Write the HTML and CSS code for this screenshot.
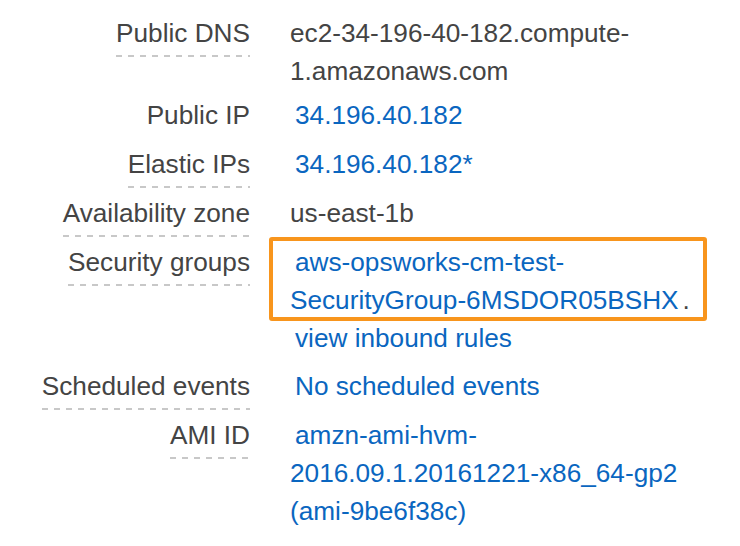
FILE: index.html
```html
<!DOCTYPE html>
<html>
<head>
<meta charset="utf-8">
<link rel="stylesheet" href="styles.css">
</head>
<body>
<dl class="details">
  <div class="row">
    <dt><span class="lbl tip">Public DNS</span></dt>
    <dd>ec2-34-196-40-182.compute-1.amazonaws.com</dd>
  </div>
  <div class="row">
    <dt><span class="lbl">Public IP</span></dt>
    <dd><a class="link">34.196.40.182</a></dd>
  </div>
  <div class="row">
    <dt><span class="lbl tip">Elastic IPs</span></dt>
    <dd><a class="link">34.196.40.182*</a></dd>
  </div>
  <div class="row">
    <dt><span class="lbl tip">Availability zone</span></dt>
    <dd>us-east-1b</dd>
  </div>
  <div class="row">
    <dt><span class="lbl tip">Security groups</span></dt>
    <dd class="sg">
      <div class="sg-name"><a class="link">aws-opsworks-cm-test-SecurityGroup-6MSDOR05BSHX</a><span class="dot">.</span></div>
      <div class="sg-rules"><a class="link">view inbound rules</a></div>
      <div class="highlight"></div>
    </dd>
  </div>
  <div class="row">
    <dt><span class="lbl tip">Scheduled events</span></dt>
    <dd><a class="link">No scheduled events</a></dd>
  </div>
  <div class="row">
    <dt><span class="lbl tip">AMI ID</span></dt>
    <dd><a class="link">amzn-ami-hvm-2016.09.1.20161221-x86_64-gp2 (ami-9be6f38c)</a></dd>
  </div>
</dl>
</body>
</html>
```
FILE: styles.css
```css
html, body {
  margin: 0;
  padding: 0;
  background: #ffffff;
}
body {
  font-family: "Liberation Sans", Arial, Helvetica, sans-serif;
  font-size: 26.2px;
  line-height: 38px;
  color: #444444;
  width: 740px;
  height: 546px;
  overflow: hidden;
}
.details {
  margin: 0;
  padding: 14px 0 0 0;
  display: flex;
  flex-direction: column;
  gap: 6px;
}
.row {
  display: grid;
  grid-template-columns: 250px 420px;
  column-gap: 40px;
  align-items: start;
}
.row dt {
  margin: 0;
  text-align: right;
}
.row dd {
  margin: 0;
}
.lbl {
  display: inline-block;
  padding-bottom: 3px;
  border-bottom: 2px solid transparent;
}
.lbl.tip {
  border-bottom: 0;
  padding-bottom: 5px;
  background-image: repeating-linear-gradient(to right, #c8c8c8 0 6px, transparent 6px 12px);
  background-size: 100% 2px;
  background-repeat: no-repeat;
  background-position: left bottom;
}
.link {
  color: #0a66c0;
  padding-left: 5px;
  text-decoration: none;
}
.dot {
  padding-left: 4px;
}
.sg {
  position: relative;
}
.sg-rules {
  margin-bottom: 4px;
}
.highlight {
  position: absolute;
  box-sizing: border-box;
  left: -21px;
  top: -6px;
  width: 438px;
  height: 84px;
  border: 4px solid #f8951d;
  border-radius: 3px;
  pointer-events: none;
}
```
